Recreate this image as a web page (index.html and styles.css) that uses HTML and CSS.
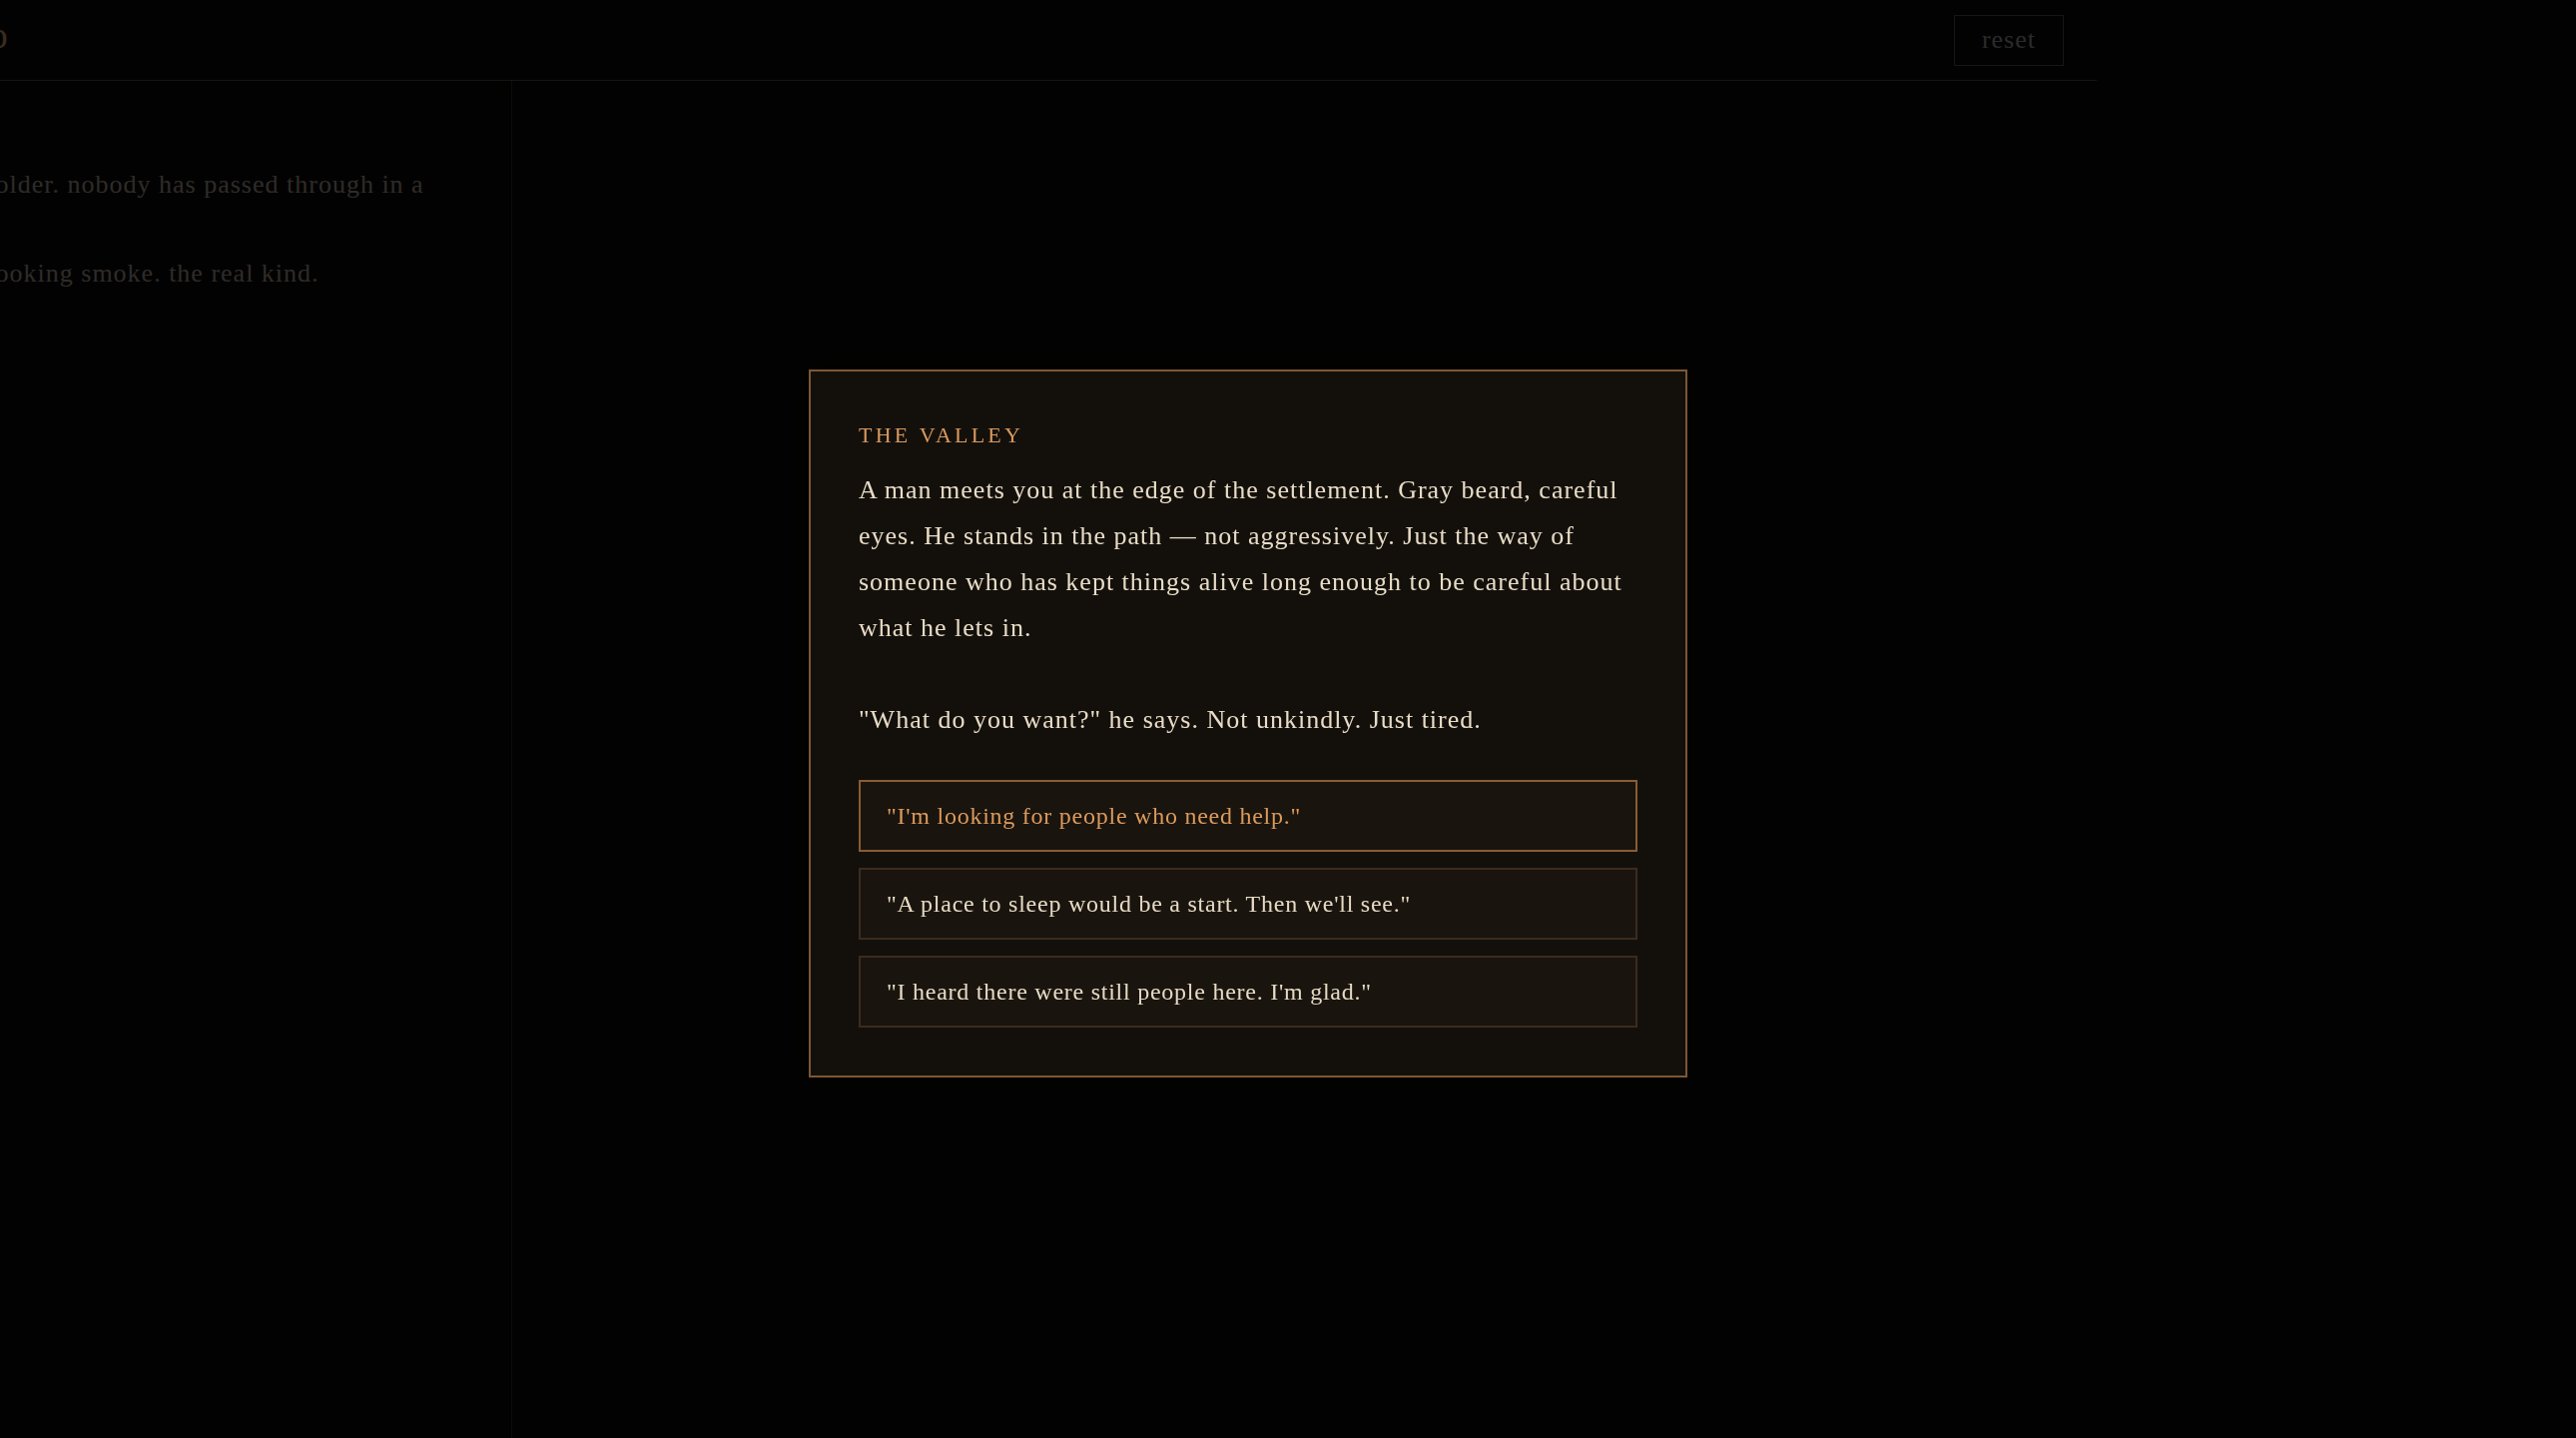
FILE: index.html
```html
<!DOCTYPE html>
<html lang="en">
<head>
<meta charset="utf-8">
<title>The Valley</title>
<link rel="stylesheet" href="styles.css">
</head>
<body>
<div class="app">
  <header class="topbar">
    <div class="title">echo</div>
    <button class="reset">reset</button>
  </header>
  <div class="main">
    <aside class="log">
      <p class="log-line">colder. nobody has passed through in a</p>
      <p class="log-line">cooking smoke. the real kind.</p>
    </aside>
    <section class="stage"></section>
  </div>
</div>

<div class="overlay">
  <div class="modal">
    <div class="modal-heading">THE VALLEY</div>
    <p class="modal-text">A man meets you at the edge of the settlement. Gray beard, careful eyes. He stands in the path — not aggressively. Just the way of someone who has kept things alive long enough to be careful about what he lets in.</p>
    <p class="modal-text">"What do you want?" he says. Not unkindly. Just tired.</p>
    <div class="choices">
      <button class="choice choice-active">"I'm looking for people who need help."</button>
      <button class="choice">"A place to sleep would be a start. Then we'll see."</button>
      <button class="choice">"I heard there were still people here. I'm glad."</button>
    </div>
  </div>
</div>
</body>
</html>
```

FILE: styles.css
```css
* {
  box-sizing: border-box;
}

html, body {
  margin: 0;
  padding: 0;
  height: 100%;
}

body {
  background: #0c0b09;
  font-family: "Liberation Serif", "Times New Roman", serif;
  overflow: hidden;
}

.app {
  width: 2100px;
  height: 100vh;
  display: flex;
  flex-direction: column;
}

.topbar {
  height: 81px;
  flex: 0 0 81px;
  display: flex;
  align-items: center;
  justify-content: space-between;
  padding-right: 33px;
  border-bottom: 1px solid #60503c;
}

.title {
  margin-left: -64px;
  margin-bottom: 10px;
  font-size: 38px;
  color: #e8b078;
}

.reset {
  height: 51px;
  padding: 0 27px;
  background: transparent;
  border: 1px solid #585858;
  color: #a8a8a8;
  font-family: "Liberation Serif", "Times New Roman", serif;
  font-size: 26px;
  letter-spacing: 1px;
}

.main {
  flex: 1;
  display: flex;
}

.log {
  width: 513px;
  flex: 0 0 513px;
  border-right: 1px solid #3c3428;
  padding-top: 81px;
  overflow: hidden;
}

.log-line {
  margin: 0 0 43px -17px;
  white-space: nowrap;
  font-size: 26px;
  letter-spacing: 1px;
  line-height: 46px;
  color: #b8aca0;
}

.stage {
  flex: 1;
}

.overlay {
  position: fixed;
  inset: 0;
  background: rgba(0, 0, 0, 0.75);
  display: flex;
  align-items: center;
  justify-content: center;
  padding: 8px 80px 0 0;
}

.modal {
  width: 880px;
  padding: 48px;
  background: #13100c;
  border: 2px solid #7d5634;
  box-shadow: 0 0 24px rgba(0, 0, 0, 0.8);
}

.modal-heading {
  font-size: 22px;
  line-height: 32px;
  letter-spacing: 3.2px;
  color: #d89a5e;
  margin-bottom: 16px;
}

.modal-text {
  margin: 0 0 46px;
  font-size: 26px;
  letter-spacing: 1px;
  line-height: 46px;
  color: #e8dcc6;
}

.modal-text:last-of-type {
  margin-bottom: 37px;
}

.choices {
  display: flex;
  flex-direction: column;
  gap: 16px;
}

.choice {
  display: block;
  width: 100%;
  text-align: left;
  padding: 16px 26px;
  background: #19140e;
  border: 2px solid #3a2c1e;
  color: #e6dac4;
  font-family: "Liberation Serif", "Times New Roman", serif;
  font-size: 24px;
  letter-spacing: 0.75px;
  line-height: 36px;
}

.choice-active {
  border-color: #8a5c34;
  color: #dc9a5c;
}
```
